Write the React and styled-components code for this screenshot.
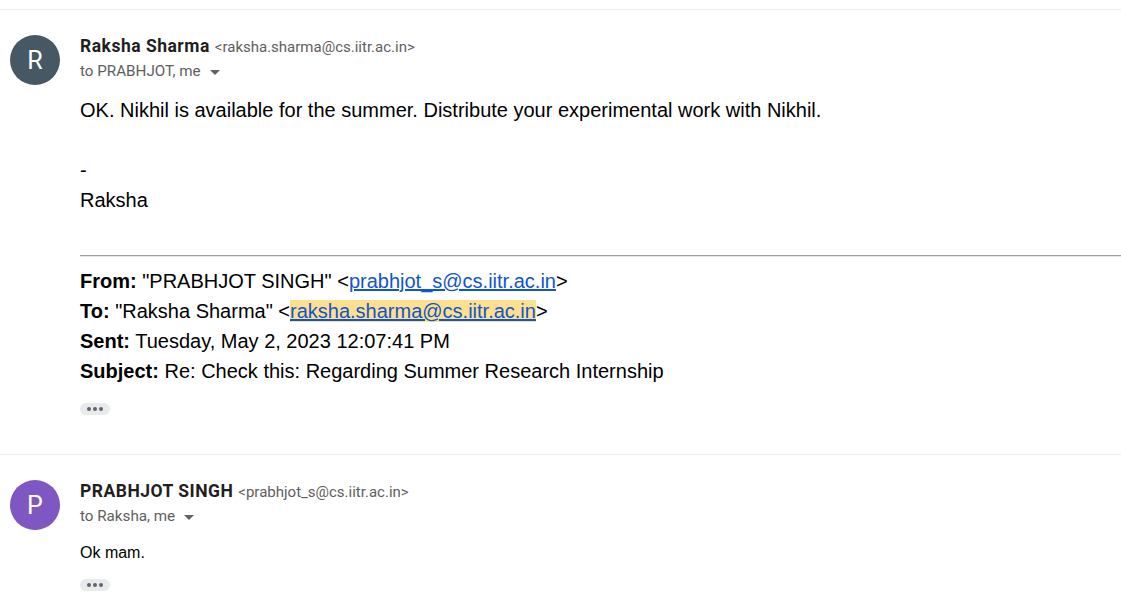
import React from "react";
import styled, { createGlobalStyle } from "styled-components";

const GlobalStyle = createGlobalStyle`
  html, body { margin: 0; padding: 0; background: #ffffff; }
  body { font-family: Roboto, "Liberation Sans", Arial, sans-serif; color: #222; overflow: hidden; }
`;

const Thread = styled.div`
  padding-top: 9px;
  width: 1121px;
`;

const Message = styled.div`
  display: flex;
  gap: 20px;
  padding: 25px 0 ${(p) => p.$pb}px 10px;
  border-top: 1px solid #efefef;
`;

const Avatar = styled.div`
  flex: 0 0 50px;
  width: 50px;
  height: 50px;
  border-radius: 50%;
  background: ${(p) => p.$bg};
  color: #fff;
  display: flex;
  align-items: center;
  justify-content: center;
  font-family: Roboto, "Liberation Sans", sans-serif;
  font-size: 25px;
  line-height: 1;
`;

const Content = styled.div`
  flex: 1;
  min-width: 0;
`;

const NameLine = styled.div`
  display: flex;
  align-items: baseline;
  gap: 5px;
  height: 24px;
  padding-top: 1px;
`;

const Name = styled.span`
  font-family: Roboto, "Liberation Sans", sans-serif;
  font-weight: 700;
  font-size: 17.5px;
  color: #1f1f1f;
  letter-spacing: 0.5px;
`;

const Addr = styled.span`
  font-family: Roboto, "Liberation Sans", sans-serif;
  font-size: 15px;
  color: #5e5e5e;
`;

const ToLine = styled.div`
  display: flex;
  align-items: center;
  gap: 7px;
  font-family: Roboto, "Liberation Sans", sans-serif;
  font-size: 15.2px;
  color: #5e5e5e;
  height: 22px;
`;

const Caret = styled.span`
  width: 0;
  height: 0;
  border-left: 5px solid transparent;
  border-right: 5px solid transparent;
  border-top: 5px solid #5f6368;
  margin-left: 2px;
  margin-top: 2px;
`;

const Body = styled.div`
  font-family: "Liberation Sans", Arial, sans-serif;
  font-size: ${(p) => p.$size}px;
  line-height: ${(p) => p.$lh}px;
  color: #000;
  margin-top: ${(p) => p.$mt}px;
`;

const Line = styled.div`
  min-height: ${(p) => p.$lh || 30}px;
`;

const Rule = styled.div`
  margin: 40px 0 9px;
  border-top: 1px solid #9e9e9e;
  border-bottom: 1px solid #e6e6e6;
`;

const Label = styled.b`
  font-weight: 700;
`;

const Link = styled.a`
  color: #1155cc;
  text-decoration: underline;
`;

const Mark = styled.span`
  background: #fddf90;
`;

const MoreBtn = styled.div`
  width: 30px;
  height: 12px;
  border-radius: 6px;
  background: #e8eaed;
  display: flex;
  align-items: center;
  justify-content: center;
  gap: 2px;
  margin-top: ${(p) => p.$mt}px;
`;

const Dot = styled.span`
  width: 4px;
  height: 4px;
  border-radius: 50%;
  background: #5f6368;
`;

const More = ({ mt }) => (
  <MoreBtn $mt={mt}>
    <Dot />
    <Dot />
    <Dot />
  </MoreBtn>
);

export default function App() {
  return (
    <>
      <GlobalStyle />
      <Thread>
        <Message $pb={39}>
          <Avatar $bg="#465864">R</Avatar>
          <Content>
            <NameLine>
              <Name>Raksha Sharma</Name>
              <Addr>&lt;raksha.sharma@cs.iitr.ac.in&gt;</Addr>
            </NameLine>
            <ToLine>
              to PRABHJOT, me <Caret />
            </ToLine>
            <Body $size={20} $lh={30} $mt={13}>
              <Line>OK. Nikhil is available for the summer. Distribute your experimental work with Nikhil.</Line>
              <Line />
              <Line>-</Line>
              <Line>Raksha</Line>
            </Body>
            <Rule />
            <Body $size={20} $lh={30} $mt={0}>
              <Line>
                <Label>From:</Label> "PRABHJOT SINGH" &lt;<Link href="#">prabhjot_s@cs.iitr.ac.in</Link>&gt;
              </Line>
              <Line>
                <Label>To:</Label> "Raksha Sharma" &lt;<Mark><Link href="#">raksha.sharma@cs.iitr.ac.in</Link></Mark>&gt;
              </Line>
              <Line>
                <Label>Sent:</Label> Tuesday, May 2, 2023 12:07:41 PM
              </Line>
              <Line>
                <Label>Subject:</Label> Re: Check this: Regarding Summer Research Internship
              </Line>
            </Body>
            <More mt={17} />
          </Content>
        </Message>
        <Message $pb={30}>
          <Avatar $bg="#7e57c2">P</Avatar>
          <Content>
            <NameLine>
              <Name>PRABHJOT SINGH</Name>
              <Addr>&lt;prabhjot_s@cs.iitr.ac.in&gt;</Addr>
            </NameLine>
            <ToLine>
              to Raksha, me <Caret />
            </ToLine>
            <Body $size={16} $lh={24} $mt={14}>
              <Line $lh={24}>Ok mam.</Line>
            </Body>
            <More mt={14} />
          </Content>
        </Message>
      </Thread>
    </>
  );
}
